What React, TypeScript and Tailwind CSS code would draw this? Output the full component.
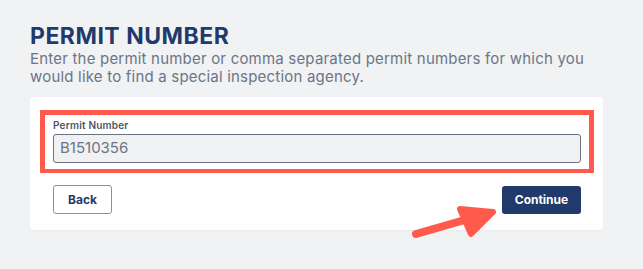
import React from 'react'

function Arrow() {
  return (
    <svg
      className="absolute left-0 top-0 pointer-events-none"
      width="643"
      height="269"
      viewBox="0 0 643 269"
    >
      <line x1="416" y1="234" x2="482" y2="215" stroke="#ff5a4b" strokeWidth="8" strokeLinecap="round" />
      <polygon
        points="460,209 493,212 471,234"
        fill="#ff5a4b"
        stroke="#ff5a4b"
        strokeWidth="6"
        strokeLinejoin="round"
      />
    </svg>
  )
}

export default function App() {
  return (
    <div className="relative min-h-screen bg-[#f1f2f4] font-['Inter',sans-serif]">
      <div className="w-[603px] pl-[30px] pt-[22px]">
        <h1 className="text-[23px] font-bold leading-[28px] tracking-[0.5px] text-[#1f3a6b]">
          PERMIT NUMBER
        </h1>
        <p className="text-[15px] leading-[18px] tracking-[0.2px] text-[#6b7587]">
          Enter the permit number or comma separated permit numbers for which you
          <br />
          would like to find a special inspection agency.
        </p>
        <div className="mt-[11px] rounded-[4px] bg-white pl-[10px] pr-[9px] pt-[13px] pb-[16px] shadow-[0_1px_2px_rgba(0,0,0,0.04)]">
          <div className="border-[5px] border-b-[4px] border-[#ff5a4b] px-[8px] pt-[3px] pb-[6px]">
            <label className="block text-[10px] font-semibold leading-[14px] tracking-[0.2px] text-[#4b5563]">
              Permit Number
            </label>
            <div className="mt-[2px] flex h-[29px] items-center rounded-[3px] border border-[#6b7280] bg-[#f0f1f3] px-[6px] text-[15px] text-[#6b7587]">
              B1510356
            </div>
          </div>
          <div className="mt-[12px] flex items-center justify-between pl-[13px] pr-[13px]">
            <button className="h-[29px] w-[59px] rounded-[3px] border border-[#8a919e] bg-white text-[12px] font-bold text-[#1f3a6b]">
              Back
            </button>
            <button className="h-[28px] w-[79px] rounded-[3px] bg-[#1f3a6b] text-[12px] font-bold text-white">
              Continue
            </button>
          </div>
        </div>
      </div>
      <Arrow />
    </div>
  )
}
